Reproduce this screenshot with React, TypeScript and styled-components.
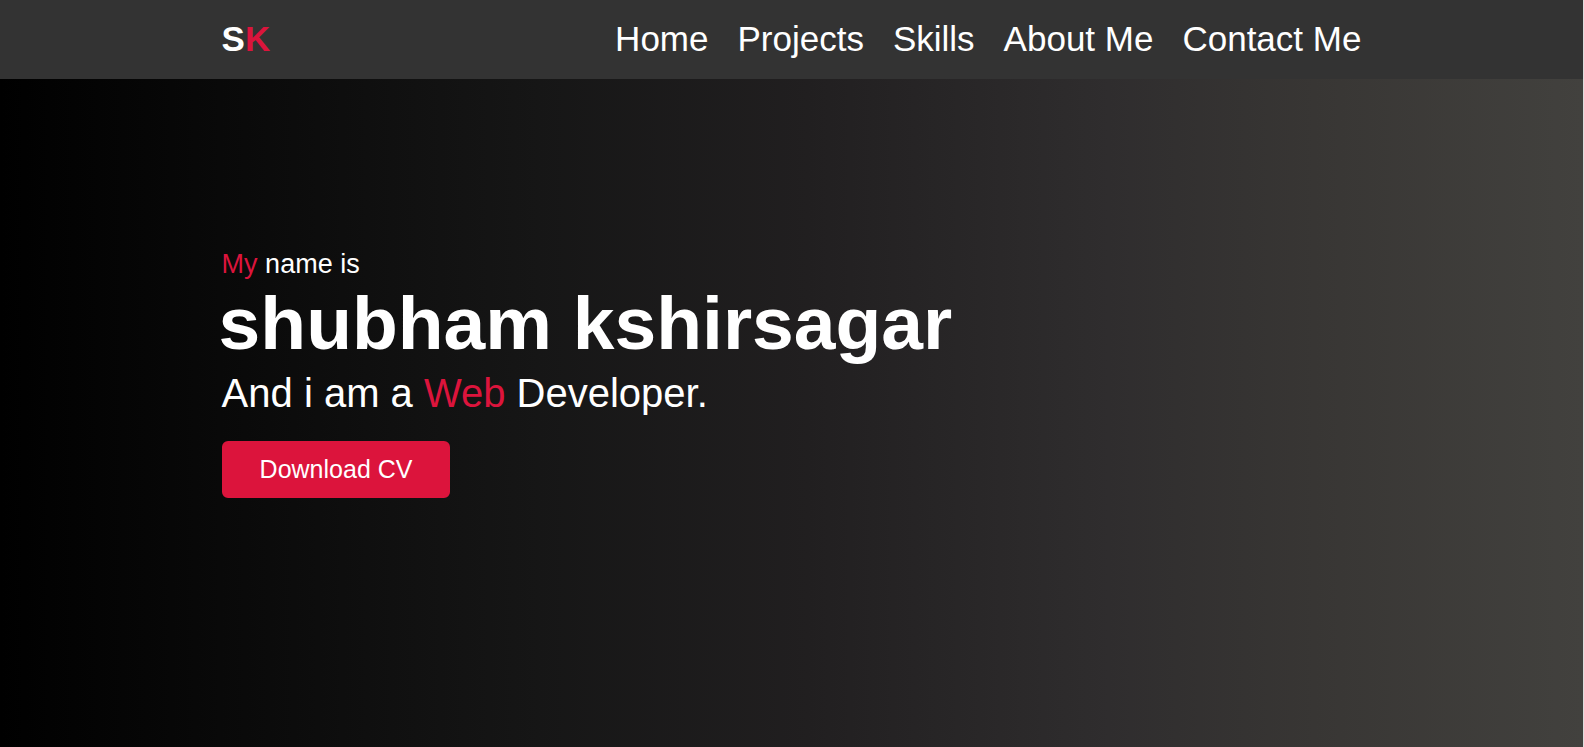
import React from "react";
import styled, { createGlobalStyle } from "styled-components";

const GlobalStyle = createGlobalStyle`
  * { box-sizing: border-box; margin: 0; padding: 0; }
  body { font-family: "Liberation Sans", Arial, sans-serif; color: #fff; background: #000; }
`;
const Page = styled.div`
  min-height: 100vh;
  display: flex;
  flex-direction: column;
  border-right: 1px solid #ddd;
`;
const Header = styled.header`
  background: #333;
  padding: 18px 14% 20px;
  display: flex;
  justify-content: space-between;
  align-items: center;
`;
const Accent = styled.span`
  color: crimson;
`;
const Logo = styled.a`
  font-size: 35px;
  line-height: 41px;
  font-weight: 700;
  color: #fff;
  text-decoration: none;
`;
const Nav = styled.nav`
  display: flex;
  gap: 29px;
`;
const NavLink = styled.a`
  font-size: 35px;
  line-height: 41px;
  color: #fff;
  text-decoration: none;
`;
const Hero = styled.main`
  flex: 1;
  padding: 169px 14% 0;
  background: linear-gradient(to right, #000000, #161616 34%, #211f20 51%, #2f2d2e 70%, #383634 83%, #42413e);
`;
const Intro = styled.p`
  font-size: 27px;
  line-height: 32px;
`;
const Name = styled.h1`
  font-size: 75px;
  line-height: 87px;
  margin-left: -3px;
`;
const Role = styled.p`
  font-size: 40px;
  line-height: 52px;
`;
const Download = styled.button`
  margin-top: 22px;
  padding: 12px 36px;
  font: 25px/29px "Liberation Sans", Arial, sans-serif;
  color: #fff;
  background: crimson;
  border: 2px solid crimson;
  border-radius: 6px;
  cursor: pointer;
`;

const links = ["Home", "Projects", "Skills", "About Me", "Contact Me"];

export default function App() {
  return (
    <Page>
      <GlobalStyle />
      <Header>
        <Logo href="#">S<Accent>K</Accent></Logo>
        <Nav>
          {links.map((label) => (
            <NavLink key={label} href="#">{label}</NavLink>
          ))}
        </Nav>
      </Header>
      <Hero>
        <Intro><Accent>My</Accent> name is</Intro>
        <Name>shubham kshirsagar</Name>
        <Role>And i am a <Accent>Web</Accent> Developer.</Role>
        <Download type="button">Download CV</Download>
      </Hero>
    </Page>
  );
}
